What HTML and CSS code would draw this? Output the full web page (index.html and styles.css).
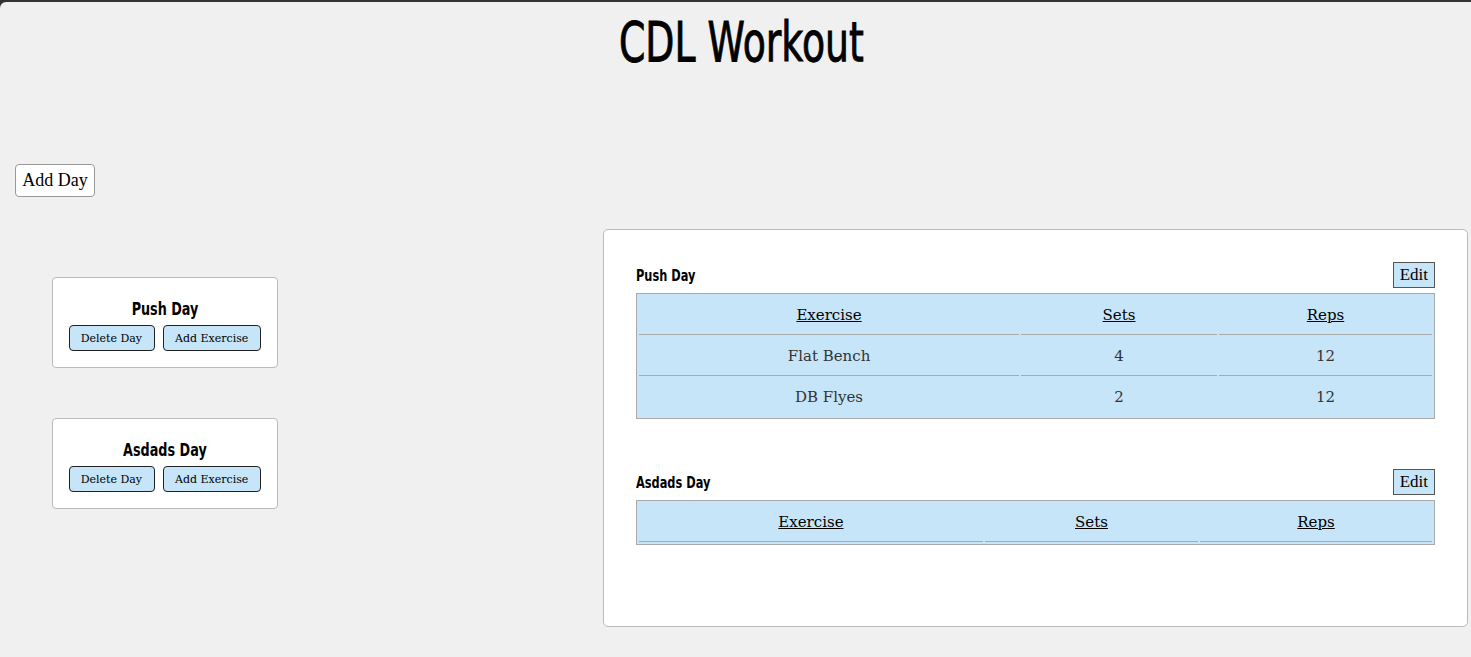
FILE: index.html
```html
<!DOCTYPE html>
<html lang="en">
<head>
<meta charset="utf-8">
<title>CDL Workout</title>
<link rel="stylesheet" href="styles.css">
</head>
<body>
<div class="page">
  <h1 class="title"><span class="condensed">CDL Workout</span></h1>
  <div class="toolbar">
    <button class="btn-add-day">Add Day</button>
  </div>
  <main class="layout">
    <section class="day-list">
      <div class="day-card">
        <h2 class="day-card-title"><span class="condensed">Push Day</span></h2>
        <div class="day-card-actions">
          <button class="btn-small">Delete Day</button>
          <button class="btn-small">Add Exercise</button>
        </div>
      </div>
      <div class="day-card">
        <h2 class="day-card-title"><span class="condensed">Asdads Day</span></h2>
        <div class="day-card-actions">
          <button class="btn-small">Delete Day</button>
          <button class="btn-small">Add Exercise</button>
        </div>
      </div>
    </section>
    <section class="panel">
      <div class="day-section">
        <div class="day-header">
          <h3 class="day-name"><span class="condensed condensed-left">Push Day</span></h3>
          <button class="btn-edit">Edit</button>
        </div>
        <table class="ex-table">
          <thead>
            <tr><th><u>Exercise</u></th><th><u>Sets</u></th><th><u>Reps</u></th></tr>
          </thead>
          <tbody>
            <tr><td>Flat Bench</td><td>4</td><td>12</td></tr>
            <tr><td>DB Flyes</td><td>2</td><td>12</td></tr>
          </tbody>
        </table>
      </div>
      <div class="day-section">
        <div class="day-header">
          <h3 class="day-name"><span class="condensed condensed-left">Asdads Day</span></h3>
          <button class="btn-edit">Edit</button>
        </div>
        <table class="ex-table">
          <thead>
            <tr><th><u>Exercise</u></th><th><u>Sets</u></th><th><u>Reps</u></th></tr>
          </thead>
          <tbody></tbody>
        </table>
      </div>
    </section>
  </main>
</div>
</body>
</html>
```
FILE: styles.css
```css
html {
  background: #333333;
  margin: 0;
  padding: 0;
}
body {
  margin: 0;
  padding-top: 2px;
  background: #333333;
  font-family: "DejaVu Serif", "Liberation Serif", serif;
}
.page {
  background: #f0f0f0;
  border-top-left-radius: 6px;
  min-height: 655px;
  padding-bottom: 1px;
}
.condensed {
  display: inline-block;
  transform: scaleX(0.71);
  transform-origin: center;
}
.condensed-left {
  transform-origin: left center;
}
.title {
  margin: 0;
  padding: 6px 0 0 12px;
  text-align: center;
  font-family: "DejaVu Sans", sans-serif;
  font-weight: normal;
  font-size: 56px;
  line-height: 68px;
  color: #000;
}
.title .condensed {
  transform: scaleX(0.675);
  -webkit-text-stroke: 1px #000;
}
.toolbar {
  padding: 88px 0 0 15px;
}
.btn-add-day {
  font-family: "Liberation Serif", serif;
  font-size: 18px;
  background: #fff;
  border: 1px solid #999;
  border-radius: 4px;
  width: 80px;
  height: 33px;
  padding: 0;
  color: #000;
}
.layout {
  display: grid;
  grid-template-columns: 603px 1fr;
  padding: 32px 3px 0 0;
}
.day-list {
  display: flex;
  flex-direction: column;
  align-items: flex-start;
  gap: 50px;
  padding: 48px 0 0 52px;
}
.day-card {
  width: 226px;
  box-sizing: border-box;
  background: #fff;
  border: 1px solid #bbb;
  border-radius: 4px;
  padding: 18px 0 16px;
  display: flex;
  flex-direction: column;
  align-items: center;
  gap: 3px;
}
.day-card-title {
  margin: 0;
  font-family: "DejaVu Sans", sans-serif;
  font-weight: bold;
  font-size: 18px;
  line-height: 26px;
  color: #000;
}
.day-card-actions {
  display: flex;
  gap: 8px;
}
.btn-small {
  font-family: "DejaVu Serif", serif;
  font-size: 11px;
  background: #c6e5f8;
  border: 1px solid #222;
  border-radius: 4px;
  height: 26px;
  padding: 0 12px 0 11px;
  color: #000;
}
.panel {
  background: #fff;
  border: 1px solid #bbb;
  border-radius: 5px;
  padding: 32px 32px 81px;
  display: flex;
  flex-direction: column;
  gap: 50px;
}
.day-header {
  display: flex;
  justify-content: space-between;
  align-items: center;
  margin-bottom: 5px;
}
.day-name {
  margin: 0;
  font-family: "DejaVu Sans", sans-serif;
  font-weight: bold;
  font-size: 16px;
  color: #000;
}
.btn-edit {
  font-family: "Liberation Serif", serif;
  font-size: 17px;
  background: #c6e5f8;
  border: 1px solid #555;
  border-radius: 0;
  height: 26px;
  padding: 0 6px;
  color: #000;
}
.ex-table {
  width: 100%;
  background: #c6e5f8;
  border: 1px solid #aaa;
  border-spacing: 2px;
}
.ex-table th,
.ex-table td {
  padding: 10px;
  line-height: 18px;
  text-align: center;
  border-bottom: 1px solid #aaa;
  font-size: 15px;
}
.ex-table th {
  font-weight: normal;
  color: #000;
}
.ex-table td {
  color: #333;
}
.ex-table tbody tr:last-child td {
  border-bottom: none;
}
```
